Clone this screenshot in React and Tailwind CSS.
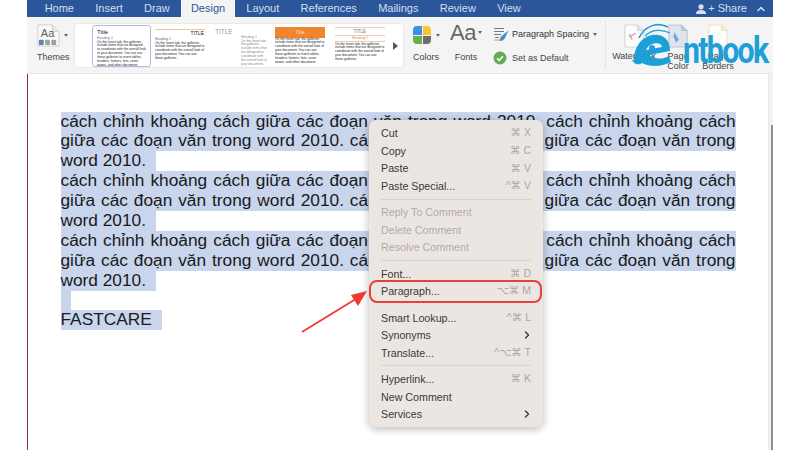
import { ChevronRight, ChevronUp } from 'lucide-react';

const tabs = ['Home', 'Insert', 'Draw', 'Design', 'Layout', 'References', 'Mailings', 'Review', 'View'];

const sentenceA = 'cách chỉnh khoảng cách giữa các đoạn văn trong word 2010. cách chỉnh khoảng cách';
const sentenceB = 'giữa các đoạn văn trong word 2010. cách chỉnh khoảng cách giữa các đoạn văn trong';

const thumbFull = 'On the Insert tab, the galleries include items that are designed to coordinate with the overall look of your document. You can use these galleries to insert tables, headers, footers, lists, cover pages, and other document.';
const thumbMid = 'On the Insert tab, the galleries include items that are designed to coordinate with the overall look of your document. You can use these galleries.';
const thumbShort = 'On the Insert tab, the galleries include items that are designed to coordinate with the overall look of your document.';

const menuGroups = [
    [
        { label: 'Cut', keys: '⌘ X' },
        { label: 'Copy', keys: '⌘ C' },
        { label: 'Paste', keys: '⌘ V' },
        { label: 'Paste Special...', keys: '^⌘ V' },
    ],
    [
        { label: 'Reply To Comment', off: true },
        { label: 'Delete Comment', off: true },
        { label: 'Resolve Comment', off: true },
    ],
    [
        { label: 'Font...', keys: '⌘ D' },
        { label: 'Paragraph...', keys: '⌥⌘ M' },
    ],
    [
        { label: 'Smart Lookup...', keys: '^⌘ L' },
        { label: 'Synonyms', more: true },
        { label: 'Translate...', keys: '^⌥⌘ T' },
    ],
    [
        { label: 'Hyperlink...', keys: '⌘ K' },
        { label: 'New Comment' },
        { label: 'Services', more: true },
    ],
];

function Caret({ className = '' }) {
    return <span className={`w-0 h-0 border-x-[2.5px] border-x-transparent border-t-[3px] border-t-[#666] ${className}`} />;
}

function ThemesIcon() {
    return (
        <svg width="23" height="23" viewBox="0 0 24 24">
            <path d="M1 1h15l7 7v15H1z" fill="#fafafa" stroke="#c4c4c4" strokeWidth="0.8" />
            <path d="M16 1v7h7" fill="#e8e8e8" stroke="#c4c4c4" strokeWidth="0.8" />
            <text x="4" y="14" fontSize="11.5" fill="#5d5d5d" fontFamily="Liberation Sans">Aa</text>
            <rect x="2" y="16.5" width="5" height="5.5" rx="1" fill="#5b84c4" />
            <rect x="8.5" y="16.5" width="5" height="5.5" rx="1" fill="#8fae8c" />
            <rect x="15" y="16.5" width="5" height="5.5" rx="1" fill="#a0a0a0" />
        </svg>
    );
}

function ColorsIcon() {
    return (
        <div className="grid grid-cols-2 gap-px w-[18px] h-[18px]">
            <div className="bg-[#3f8fe0] rounded-tl-sm" />
            <div className="bg-[#f7c534] rounded-tr-sm" />
            <div className="bg-[#66ae52] rounded-bl-sm" />
            <div className="bg-[#6d6d6d] rounded-br-sm" />
        </div>
    );
}

function SpacingIcon() {
    return (
        <svg width="16" height="15" viewBox="0 0 16 15">
            <path d="M1 1.5h10M1 4.5h10M1 7.5h7M2 10.5h4" stroke="#777" strokeWidth="1" />
            <path d="M15.5 3.5L8 9.5 6 14c3 .3 5-1 6-3z" fill="#3d8fdc" />
            <path d="M1 13h6" stroke="#e8b23a" strokeWidth="1.2" />
        </svg>
    );
}

function CheckIcon() {
    return (
        <svg width="14" height="14" viewBox="0 0 14 14">
            <circle cx="7" cy="7" r="6.5" fill="#62ad54" />
            <path d="M4 7.2l2.2 2.2L10 5.2" fill="none" stroke="#fff" strokeWidth="1.5" />
        </svg>
    );
}

function PageIcon({ children, stroke = '#c6c6c6', fill = '#fcfcfc', fold = '#e6e6e6' }) {
    return (
        <svg width="22" height="24" viewBox="0 0 24 26">
            <path d="M2 1h14l6 6v18H2z" fill={fill} stroke={stroke} strokeWidth="0.8" />
            <path d="M16 1v6h6" fill={fold} stroke={stroke} strokeWidth="0.8" />
            {children}
        </svg>
    );
}

function Thumb({ className, children }) {
    return <div className={`shrink-0 overflow-hidden text-[#222] ${className}`}>{children}</div>;
}

function Tiny({ className = '', children }) {
    return <p className={`text-[3.3px] leading-[3.9px] ${className}`}>{children}</p>;
}

function Gallery() {
    return (
        <div className="w-[330px] h-[45px] bg-white rounded-[4px] border border-[#e9e9e9] flex items-center">
            <Thumb className="ml-[17px] w-[59px] h-[42px] rounded-[3px] border border-[#a9bfdd] px-[4px] py-[3px]">
                <p className="text-[6px] leading-[7px]">Title</p>
                <p className="text-[3.5px] leading-[5px] text-[#5b80b5]">Heading 1</p>
                <Tiny>{thumbFull}</Tiny>
            </Thumb>
            <Thumb className="ml-[4px] w-[50px] h-[36px] mb-[4px]">
                <div className="border-t border-[#efc79a] mt-[3px] text-right text-[5px] leading-[7px] pr-[1px]">TITLE</div>
                <p className="text-[3.5px] leading-[5px] text-[#4a6d9a]">Heading 1</p>
                <Tiny>{thumbMid}</Tiny>
            </Thumb>
            <Thumb className="ml-[10px] w-[22px] h-[36px] mb-[2px]">
                <p className="text-[6.5px] leading-[10px] text-[#999]">TITLE</p>
            </Thumb>
            <Thumb className="ml-[4px] w-[26px] h-[32px] mt-[10px]">
                <p className="text-[3.5px] leading-[5px] text-[#7a8ca5]">Heading 1</p>
                <Tiny className="text-[#888]">{thumbShort}</Tiny>
            </Thumb>
            <Thumb className="ml-[8px] w-[50px] h-[36px] mb-[2px]">
                <div className="bg-[#f0852c] h-[11px] text-center text-[5px] leading-[11px] text-[#ffe2c8]">Title</div>
                <Tiny>{thumbFull}</Tiny>
            </Thumb>
            <Thumb className="ml-[10px] w-[50px] h-[36px] mb-[2px]">
                <div className="border-y border-[#f0c9b8] text-center text-[4.5px] leading-[7px] text-[#777]">TITLE</div>
                <p className="text-[3.5px] leading-[5px] text-center text-[#d9835a] border-b border-[#f0c9b8]">Heading 1</p>
                <Tiny className="mt-px">{thumbMid}</Tiny>
            </Thumb>
            <div className="ml-[8px] w-0 h-0 border-y-[4px] border-y-transparent border-l-[5px] border-l-[#555]" />
        </div>
    );
}

function Ribbon() {
    return (
        <div className="h-[57px] bg-[#f4f4f4] border-b border-[#e6e6e6] flex text-[9px] leading-[12px] text-[#444]">
            <div className="w-[47px] shrink-0 flex flex-col items-start pl-[10px] pt-[7px]">
                <div className="flex items-center gap-[4px]">
                    <ThemesIcon />
                    <Caret />
                </div>
                <span className="mt-[4px]">Themes</span>
            </div>
            <div className="pt-[6px]">
                <Gallery />
            </div>
            <div className="ml-[9px] w-[26px] shrink-0 flex flex-col items-start pt-[9px]">
                <div className="flex items-center gap-[5px]">
                    <ColorsIcon />
                    <Caret />
                </div>
                <span className="mt-[7px] self-center">Colors</span>
            </div>
            <div className="ml-[11px] w-[32px] shrink-0 flex flex-col items-center">
                <div className="flex items-center gap-[2px] h-[31px]">
                    <span className="text-[22px] leading-none text-[#666] tracking-[-0.5px]">Aa</span>
                    <Caret />
                </div>
                <span className="mt-[3px]">Fonts</span>
            </div>
            <div className="ml-[11px] w-[112px] shrink-0 flex flex-col pt-[9px]">
                <div className="flex items-center gap-[3px] h-[16px] whitespace-nowrap">
                    <SpacingIcon />
                    <span className="text-[#333]">Paragraph Spacing</span>
                    <Caret className="ml-[1px]" />
                </div>
                <div className="flex items-center gap-[5px] mt-[8px] h-[16px]">
                    <CheckIcon />
                    <span>Set as Default</span>
                </div>
            </div>
            <div className="w-px bg-[#e2e2e2] my-[4px]" />
            <div className="ml-[5px] w-[46px] shrink-0 flex flex-col items-center pt-[7px]">
                <PageIcon>
                    <path d="M7 14l7-4M7 11l3 6" stroke="#e69ab8" strokeWidth="1.5" />
                </PageIcon>
                <span className="mt-[3px] leading-[10px]">Watermark</span>
            </div>
            <div className="ml-[5px] w-[32px] shrink-0 flex flex-col items-center pt-[7px] text-center">
                <PageIcon stroke="#aab4c4" fill="#dfe5ee" fold="#c3ccd8">
                    <path d="M8 9l5 8-3 3-3-6z" fill="#7aa3d4" />
                </PageIcon>
                <span className="mt-[3px] leading-[10px]">Page Color</span>
            </div>
            <div className="ml-[4px] w-[40px] shrink-0 flex flex-col items-center pt-[7px] text-center">
                <PageIcon stroke="#e9d9a4" fold="#f6ecc8" />
                <span className="mt-[3px] leading-[10px]">Page Borders</span>
            </div>
        </div>
    );
}

function FullLine({ text }) {
    return <div className="bg-[#c8d5ec] [text-align:justify] [text-align-last:justify] h-[19.9px]">{text}</div>;
}

function Paragraph() {
    return (
        <>
            <FullLine text={sentenceA} />
            <FullLine text={sentenceB} />
            <div className="bg-[#c8d5ec] w-[95px] h-[19.9px]">word 2010.</div>
        </>
    );
}

function ContextMenu() {
    return (
        <div className="absolute left-[369px] top-[120px] w-[174px] h-[307px] rounded-[7px] bg-[#ece6e3] shadow-[0_2px_9px_rgba(0,0,0,0.28)] pt-[4.4px] text-[10.7px] font-['Liberation_Sans','DejaVu_Sans',sans-serif]">
            {menuGroups.map((group, i) => (
                <div key={i}>
                    {i > 0 && (
                        <div className="h-[8.7px] flex items-center px-[12px]">
                            {i !== 3 && <div className="h-px w-full bg-[#d9d3d0]" />}
                        </div>
                    )}
                    {group.map((item) => (
                        <div key={item.label} className="h-[17.6px] px-[12px] flex items-center justify-between">
                            <span className={item.off ? 'text-[#b3abaa]' : 'text-[#3b3938]'}>{item.label}</span>
                            {item.keys && <span className="text-[#aca5a3] text-[10.5px] whitespace-nowrap">{item.keys}</span>}
                            {item.more && <ChevronRight size={12} strokeWidth={2.6} className="text-[#333] -mr-[2px]" />}
                        </div>
                    ))}
                </div>
            ))}
            <div className="absolute left-0 top-[160px] w-[173px] h-[23px] rounded-[8px] border-2 border-[#e8403a]" />
        </div>
    );
}

function Arrow() {
    return (
        <svg className="absolute left-[295px] top-[285px]" width="80" height="55" viewBox="0 0 80 55">
            <path d="M7 47L64 12" stroke="#ee3b32" strokeWidth="1.8" fill="none" />
            <path d="M72 6L56 10L63 21z" fill="#ee3b32" />
        </svg>
    );
}

function Logo() {
    return (
        <div className="absolute left-[632px] top-[20px] w-[145px] h-[48px]">
            <svg className="absolute left-0 top-0" width="50" height="48" viewBox="0 0 50 48">
                <path d="M7 18C12 7 24 1 36 7" fill="none" stroke="#1d9fd8" strokeWidth="1.6" />
                <path d="M13 16C20 9 30 9 38 13" fill="none" stroke="#1d9fd8" strokeWidth="1.2" />
                <path d="M2 40C2 24 14 13 26 15c8 1 12 7 12 16l-21 4c5 4 12 5 20 1l2 6c-10 5-21 5-29 1-4 3-8 1-10-3z" fill="#1d9fd8" />
                <path d="M14 30c2-5 9-8 14-6 1 1 2 2 2 3z" fill="#f4f4f4" />
                <circle cx="20" cy="28" r="3" fill="#1d9fd8" />
            </svg>
            <span className="absolute left-[51px] top-[9px] origin-left scale-x-[0.84] text-[36px] leading-[44px] font-bold tracking-[-2px] text-[#1d9fd8] font-['Roboto',sans-serif]">ntbook</span>
        </div>
    );
}

export default function App() {
    return (
        <div className="relative w-[800px] h-[450px] overflow-hidden bg-white flex font-['Liberation_Sans',sans-serif]">
            <div className="w-[27px] shrink-0" />
            <div className="w-[746px] h-full flex flex-col">
                <div className="h-[17px] bg-[#2b579a] flex items-center pl-[7px] text-[11px] text-[#d4dff0]">
                    {tabs.map((tab) => (
                        <div
                            key={tab}
                            className={tab === 'Design' ? 'h-full leading-[17px] px-[9.5px] mx-px bg-[#f4f4f4] text-[#2b579a]' : 'h-full leading-[17px] px-[10.65px]'}
                        >
                            {tab}
                        </div>
                    ))}
                    <div className="ml-auto flex items-center gap-[8px] pr-[6px]">
                        <div className="flex items-center gap-[1px]">
                            <svg width="12" height="10" viewBox="0 0 12 10">
                                <circle cx="6" cy="2.8" r="2.6" fill="#d4dff0" />
                                <path d="M1 10c0-3 2-4 5-4s5 1 5 4z" fill="#d4dff0" />
                            </svg>
                            <span>+ Share</span>
                        </div>
                        <ChevronUp size={12} strokeWidth={3} />
                    </div>
                </div>
                <Ribbon />
                <div className="flex-1 flex min-h-0">
                    <div className="flex-1 border-l-[1.5px] border-[#8f2c2c] pl-[32.5px] pt-[37.5px] text-[17.3px] leading-[19.9px] text-[#1a1a1a]">
                        <div className="w-[675px]">
                            <Paragraph />
                            <Paragraph />
                            <Paragraph />
                            <div className="bg-[#c8d5ec] w-[10px] h-[19.9px]" />
                            <div className="bg-[#c8d5ec] w-[101px] h-[19.9px]">FASTCARE</div>
                        </div>
                    </div>
                    <div className="w-[5px] bg-[#f3f3f3] border-l border-[#e8e8e8] flex flex-col pt-[51px]">
                        <div className="ml-auto w-[2px] flex-1 bg-[#8f8f8f]" />
                    </div>
                </div>
            </div>
            <Logo />
            <ContextMenu />
            <Arrow />
        </div>
    );
}
